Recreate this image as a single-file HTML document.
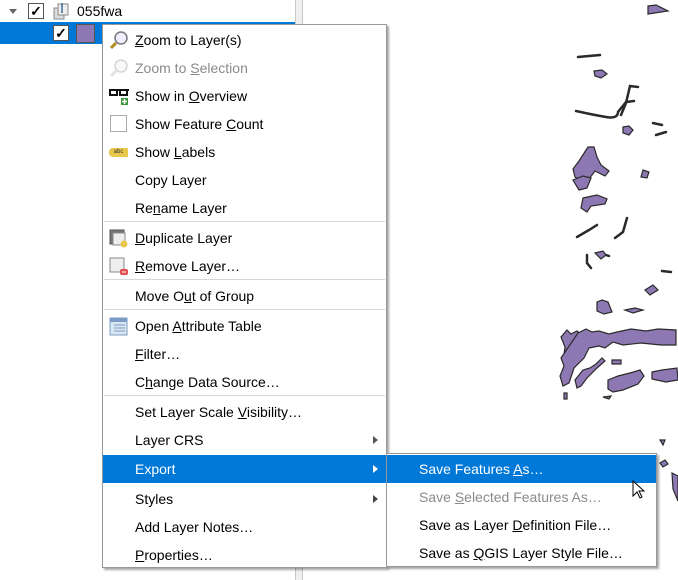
<!DOCTYPE html>
<html><head><meta charset="utf-8"><style>
*{margin:0;padding:0;box-sizing:border-box}
body{width:678px;height:580px;overflow:hidden;background:#fff;position:relative;font-family:"Segoe UI","Liberation Sans",sans-serif;font-size:14px;color:#000}
.abs{position:absolute}
.menu{position:absolute;background:#fff;border:1px solid #979797;box-shadow:2px 2px 2px rgba(0,0,0,.35)}
.it{position:absolute;left:0;right:0;height:28px;line-height:29px;white-space:nowrap}
.it span.t{position:absolute;left:32px}
.dis{color:#8a8a8a}
.sel{background:#0078d7;color:#fff}
.sep{position:absolute;left:1px;right:1px;height:1px;background:#d7d7d7}
.arr{position:absolute;right:8px;top:10px;width:0;height:0;border-left:5px solid #444;border-top:4px solid transparent;border-bottom:4px solid transparent}
u{text-decoration:underline}
</style></head><body>
<svg class="abs" style="left:0;top:0" width="678" height="580" fill="#8e78b3" stroke="#2a2a2a" stroke-width="1.2">
<g fill="none" stroke-width="2.5" stroke-linecap="round">
<path d="M578 57l22-2"/>
<path d="M576 111q18 4 30 6t12-5l8-10 8-1"/>
<path d="M621 115l5-12 4-17 8 1"/>
<path d="M653 123l9 2"/>
<path d="M656 135l10-3"/>
<path d="M577 237l12-7 8-5"/>
<path d="M615 238l8-6 4-14"/>
<path d="M587 255l0 8 4 5"/>
<path d="M662 271l9 1"/>
<path d="M606 255l3 1"/>
</g>
<path d="M648 6l8-1 12 6-20 3z"/>
<path d="M594 71l8-1 5 4-6 4-6-2z"/>
<path d="M623 127l6-1 4 4-4 5-6-2z"/>
<path d="M588 147l6 0 3 10 4 8 8 6-4 5-10-5-6 8-8 2-6-4-2-8 6-8z"/>
<path d="M573 180l10-4 8 2-4 10-8 2z"/>
<path d="M583 198l14-3 10 4-2 5-14 2-4 6-6-4z"/>
<path d="M643 170l6 2-2 6-6-1z"/>
<path d="M595 253l8-2 3 4-5 4z"/>
<path d="M597 302l5-2 6 2 4 10-8 2-7-3z"/>
<path d="M645 290l8-5 5 5-8 5z"/>
<path d="M625 310l10-2 8 2-10 3z"/>
<path d="M567 330l4 4 6-3 5 4-6 6-5 5 6 6-10 12-4-2 2-15-4-10z"/>
<path d="M578 333l8-4 6 3 7-1 10 3 8-2 14-3 15 2 12-2 18 1 0 15-15 0-20-2-18 2-10-3-8 6-6-2-10 2-5 10-10 10-5 15-6 3-3-10 4-10-3-8z"/>
<path d="M612 360l9 0 0 4-9 0z"/>
<path d="M575 380l8-10 7-2 6-4 6-6 3 3-8 7-10 10-6 8-4 2z"/>
<path d="M608 380l10-4 12-3 10-3 4 6-6 8-15 6-10 2-5-3z"/>
<path d="M652 372l10-2 15-2 1 12-12 2-14-3z"/>
<path d="M564 393l3 0 0 6-3 0z"/>
<path d="M603 397l8-1-2 3z"/>
<path d="M660 440l5 0-2 5z"/>
<path d="M660 463l5-3 3 4-5 3z"/>
<path d="M672 473l6 3 0 25-5-12z"/>
</svg>
<div class="abs" style="left:0;top:0;width:295px;height:580px;background:#fff"></div>
<div class="abs" style="left:295px;top:0;width:8px;height:580px;background:#efefef;border-left:1px solid #c8c8c8;border-right:1px solid #c8c8c8"></div>
<div class="abs" style="left:9px;top:9px;border-top:5px solid #666;border-left:4px solid transparent;border-right:4px solid transparent"></div>
<div class="abs" style="left:28px;top:3px;width:16px;height:16px;border:1px solid #555;background:#fff;font-size:14px;line-height:14px;text-align:center;font-weight:bold">✓</div>
<svg class="abs" style="left:52px;top:1px" width="18" height="20"><rect x="2" y="7" width="10" height="11" fill="#ddd" stroke="#888"/><rect x="6" y="3" width="10" height="11" fill="#eee" stroke="#888"/><path d="M10 2v10" stroke="#3a6ea5" stroke-width="1.5"/></svg>
<div class="abs" style="left:77px;top:1px;line-height:20px">055fwa</div>
<div class="abs" style="left:0;top:22px;width:295px;height:22px;background:#0078d7"></div>
<div class="abs" style="left:53px;top:25px;width:16px;height:16px;border:1px solid #555;background:#fff;font-size:14px;line-height:14px;text-align:center;font-weight:bold">✓</div>
<div class="abs" style="left:76px;top:24px;width:19px;height:19px;background:#8e78b3;border:1px solid #555"></div>
<div class="menu" style="left:102px;top:24px;width:285px;height:544px">
<div class="it" style="top:1px"><svg class="abs" style="left:6px;top:4px" width="20" height="20"><circle cx="12" cy="8" r="6" fill="#eef" stroke="#777" stroke-width="1.5"/><path d="M7 13l-5 5" stroke="#b08a20" stroke-width="3"/></svg><span class="t"><u>Z</u>oom to Layer(s)</span></div>
<div class="it dis" style="top:29px"><svg class="abs" style="left:6px;top:4px" width="20" height="20" opacity=".4"><circle cx="12" cy="8" r="6" fill="#eee" stroke="#999" stroke-width="1.5"/><path d="M7 13l-5 5" stroke="#bbb" stroke-width="3"/></svg><span class="t">Zoom to <u>S</u>election</span></div>
<div class="it" style="top:57px"><svg class="abs" style="left:5px;top:5px" width="22" height="20"><path d="M1 3h20M2 3v5h7V3M12 3v5h7V3" fill="none" stroke="#111" stroke-width="2"/><rect x="13" y="11" width="7" height="7" fill="#3a9a3a"/><path d="M16.5 12v5M14 14.5h5" stroke="#fff" stroke-width="1.5"/></svg><span class="t">Show in <u>O</u>verview</span></div>
<div class="it" style="top:85px"><div class="abs" style="left:7px;top:5px;width:17px;height:17px;border:1px solid #aaa;background:#fff"></div><span class="t">Show Feature <u>C</u>ount</span></div>
<div class="it" style="top:113px"><div class="abs" style="left:6px;top:10px;width:19px;height:9px;background:#e8c84a;border-radius:4px 1px 1px 4px;font-size:6px;line-height:9px;text-align:center;color:#333">abc</div><span class="t">Show <u>L</u>abels</span></div>
<div class="it" style="top:141px"><span class="t">Copy Layer</span></div>
<div class="it" style="top:169px"><span class="t">Re<u>n</u>ame Layer</span></div>
<div class="sep" style="top:196px"></div>
<div class="it" style="top:199px"><svg class="abs" style="left:6px;top:5px" width="20" height="20"><rect x="1" y="1" width="14" height="14" fill="#777" stroke="#555"/><rect x="4" y="4" width="12" height="12" fill="#eee" stroke="#888"/><circle cx="15" cy="15" r="3.5" fill="#e8c84a"/></svg><span class="t"><u>D</u>uplicate Layer</span></div>
<div class="it" style="top:227px"><svg class="abs" style="left:6px;top:5px" width="20" height="20"><rect x="1" y="1" width="14" height="14" fill="#eee" stroke="#888"/><rect x="11" y="12" width="8" height="6" rx="2" fill="#e05050"/><path d="M13 15h4" stroke="#fff"/></svg><span class="t"><u>R</u>emove Layer…</span></div>
<div class="sep" style="top:254px"></div>
<div class="it" style="top:257px"><span class="t">Move O<u>u</u>t of Group</span></div>
<div class="sep" style="top:284px"></div>
<div class="it" style="top:287px"><svg class="abs" style="left:6px;top:5px" width="20" height="20"><rect x="1" y="1" width="17" height="17" fill="#dbe6f3" stroke="#7a9cc6"/><rect x="1" y="1" width="17" height="4" fill="#7a9cc6"/><path d="M5 8h11M5 11h11M5 14h11" stroke="#7a9cc6"/></svg><span class="t">Open <u>A</u>ttribute Table</span></div>
<div class="it" style="top:315px"><span class="t"><u>F</u>ilter…</span></div>
<div class="it" style="top:343px"><span class="t">C<u>h</u>ange Data Source…</span></div>
<div class="sep" style="top:370px"></div>
<div class="it" style="top:373px"><span class="t">Set Layer Scale <u>V</u>isibility…</span></div>
<div class="it" style="top:401px"><span class="t">Layer CRS</span><div class="arr" style="border-left-color:#555"></div></div>
<div class="it sel" style="top:430px"><span class="t">Export</span><div class="arr" style="border-left-color:#fff"></div></div>
<div class="it" style="top:460px"><span class="t">Styles</span><div class="arr"></div></div>
<div class="it" style="top:488px"><span class="t">Add Layer Notes…</span></div>
<div class="it" style="top:516px"><span class="t"><u>P</u>roperties…</span></div>
</div>
<div class="menu" style="left:386px;top:453px;width:271px;height:114px">
<div class="it sel" style="top:1px"><span class="t">Save Features <u>A</u>s…</span></div>
<div class="it dis" style="top:29px"><span class="t">Save <u>S</u>elected Features As…</span></div>
<div class="it" style="top:57px"><span class="t">Save as Layer <u>D</u>efinition File…</span></div>
<div class="it" style="top:85px"><span class="t">Save as <u>Q</u>GIS Layer Style File…</span></div>
</div>
<svg class="abs" style="left:632px;top:480px" width="14" height="20"><path d="M1 1v15l4-4 3 6 2-1-3-6h5z" fill="#fff" stroke="#000"/></svg>
</body></html>
